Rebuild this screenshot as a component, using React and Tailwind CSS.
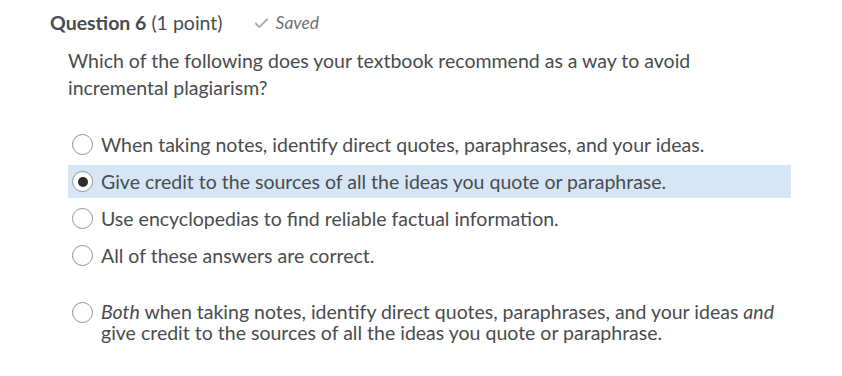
import { Check } from "lucide-react";

const options = [
  { id: 1, text: "When taking notes, identify direct quotes, paraphrases, and your ideas." },
  { id: 2, text: "Give credit to the sources of all the ideas you quote or paraphrase.", selected: true },
  { id: 3, text: "Use encyclopedias to find reliable factual information." },
  { id: 4, text: "All of these answers are correct." },
];

const Radio = ({ checked }) => (
  <span className="flex h-[21px] w-[21px] shrink-0 items-center justify-center rounded-full border-[1.5px] border-[#8f9396] bg-white">
    {checked && <span className="h-[10px] w-[10px] rounded-full bg-[#2b2d2f]" />}
  </span>
);

export default function App() {
  return (
    <div className="min-h-[376px] w-[842px] bg-white pl-[50px] pt-[9px] font-['Lato','Noto_Sans',sans-serif] text-[#494c4e]">
      <div className="flex h-[28px] items-center">
        <h2 className="text-[19.5px] leading-[28px]">
          <span className="font-bold">Question 6</span> (1 point)
        </h2>
        <span className="ml-[30px] flex items-center gap-[6px] text-[17.5px] italic text-[#6e7376]">
          <Check className="h-[17px] w-[17px] text-[#a9adb0]" strokeWidth={2.5} />
          Saved
        </span>
      </div>

      <div className="ml-[18px] mt-[10px] text-[19.5px]">
        <p className="w-[660px] leading-[27px]">
          Which of the following does your textbook recommend as a way to avoid incremental plagiarism?
        </p>

        <div className="mt-[27px] flex w-[723px] flex-col gap-[4px]">
          {options.map((o) => (
            <label
              key={o.id}
              className={`flex h-[33px] items-center gap-[8px] pl-[4px] ${o.selected ? "bg-[#d6e6f7]" : ""}`}
            >
              <Radio checked={o.selected} />
              <span>{o.text}</span>
            </label>
          ))}
        </div>

        <div className="mt-[29px] flex gap-[8px] pl-[4px] leading-[21px]">
          <span className="pt-[1px]">
            <Radio />
          </span>
          <span className="w-[690px]">
            <em>Both</em> when taking notes, identify direct quotes, paraphrases, and your ideas <em>and</em> give credit to the sources of all the ideas you quote or paraphrase.
          </span>
        </div>
      </div>
    </div>
  );
}
